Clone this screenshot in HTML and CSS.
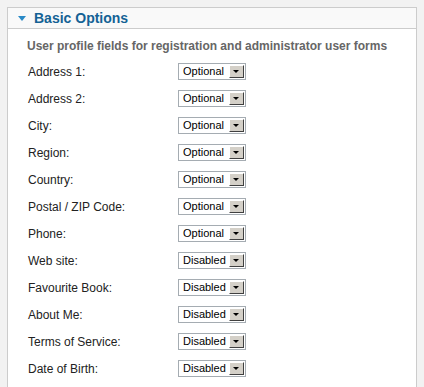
FILE: index.html
```html
<!DOCTYPE html>
<html lang="en">
<head>
    <meta charset="UTF-8">
    <title>Basic Options</title>
    <link rel="stylesheet" href="styles.css">
</head>
<body>
    <div class="panel">
        <h3 class="panel-title"><span class="toggle"></span>Basic Options</h3>
        <div class="panel-body">
            <p class="desc">User profile fields for registration and administrator user forms</p>
            <ul class="fields">
                <li><label>Address 1:</label><span class="select"><span class="value">Optional</span><span class="arrow"></span></span></li>
                <li><label>Address 2:</label><span class="select"><span class="value">Optional</span><span class="arrow"></span></span></li>
                <li><label>City:</label><span class="select"><span class="value">Optional</span><span class="arrow"></span></span></li>
                <li><label>Region:</label><span class="select"><span class="value">Optional</span><span class="arrow"></span></span></li>
                <li><label>Country:</label><span class="select"><span class="value">Optional</span><span class="arrow"></span></span></li>
                <li><label>Postal / ZIP Code:</label><span class="select"><span class="value">Optional</span><span class="arrow"></span></span></li>
                <li><label>Phone:</label><span class="select"><span class="value">Optional</span><span class="arrow"></span></span></li>
                <li><label>Web site:</label><span class="select"><span class="value">Disabled</span><span class="arrow"></span></span></li>
                <li><label>Favourite Book:</label><span class="select"><span class="value">Disabled</span><span class="arrow"></span></span></li>
                <li><label>About Me:</label><span class="select"><span class="value">Disabled</span><span class="arrow"></span></span></li>
                <li><label>Terms of Service:</label><span class="select"><span class="value">Disabled</span><span class="arrow"></span></span></li>
                <li><label>Date of Birth:</label><span class="select"><span class="value">Disabled</span><span class="arrow"></span></span></li>
            </ul>
        </div>
    </div>
</body>
</html>
```

FILE: styles.css
```css
* {
    margin: 0;
    padding: 0;
    box-sizing: border-box;
}

body {
    font-family: "Liberation Sans", Arial, sans-serif;
    background-color: #f2f2f2;
    color: #333;
    padding: 7px 7px 0 7px;
    height: 387px;
    overflow: hidden;
}

.panel {
    width: 410px;
    height: 380px;
    overflow: hidden;
    border: 1px solid #ccc;
    border-bottom: none;
    background-color: #fff;
}

.panel-title {
    display: flex;
    align-items: center;
    height: 21px;
    padding-left: 10px;
    background-color: #f9f9f9;
    border-bottom: 1px solid #ccc;
    font-size: 14px;
    font-weight: bold;
    color: #146295;
}

.toggle {
    width: 0;
    height: 0;
    border-left: 4px solid transparent;
    border-right: 4px solid transparent;
    border-top: 5px solid #2a8ac7;
    margin-right: 8px;
    margin-top: 1px;
}

.panel-body {
    padding: 9px 0 0 19px;
}

.desc {
    font-size: 12px;
    line-height: 16px;
    font-weight: bold;
    color: #666;
    margin-bottom: 4px;
}

.fields {
    list-style: none;
}

.fields li {
    display: flex;
    align-items: center;
    height: 27px;
}

.fields label {
    width: 151px;
    padding-left: 1px;
    font-size: 12px;
    color: #222;
}

.select {
    display: flex;
    align-items: center;
    width: 68px;
    height: 17px;
    border: 1px solid #a5acb2;
    background-color: #fff;
    padding: 1px;
}

.value {
    flex: 1;
    font-size: 11px;
    color: #000;
    padding-left: 3px;
    line-height: 13px;
}

.arrow {
    position: relative;
    width: 15px;
    height: 13px;
    background-color: #d4d0c8;
    border-top: 1px solid #fff;
    border-left: 1px solid #fff;
    border-right: 1px solid #404040;
    border-bottom: 1px solid #404040;
}

.arrow::after {
    content: "";
    position: absolute;
    left: 3px;
    top: 4px;
    border-left: 3px solid transparent;
    border-right: 3px solid transparent;
    border-top: 3px solid #000;
}
```
